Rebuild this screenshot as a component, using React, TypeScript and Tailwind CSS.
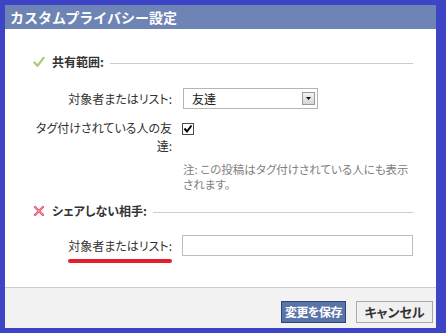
import React from 'react';

const jp = "font-['Noto_Sans_CJK_JP','Noto_Sans',sans-serif] [font-feature-settings:'palt']";

function CheckIcon() {
  return (
    <svg width="13" height="12" viewBox="0 0 13 12">
      <path d="M1.5 6.5 L5 10 L11.5 1.5" fill="none" stroke="#8cc152" strokeWidth="2.2" strokeLinecap="round" strokeLinejoin="round" />
      <path d="M1.5 6.5 L5 10 L11.5 1.5" fill="none" stroke="#c8e6a0" strokeWidth="0.8" strokeLinecap="round" strokeLinejoin="round" />
    </svg>
  );
}

function CrossIcon() {
  return (
    <svg width="12" height="12" viewBox="0 0 12 12">
      <path d="M2 2 L10 10 M10 2 L2 10" fill="none" stroke="#e0566a" strokeWidth="2.4" strokeLinecap="round" />
      <path d="M2 2 L10 10 M10 2 L2 10" fill="none" stroke="#f3a3ae" strokeWidth="0.7" strokeLinecap="round" />
    </svg>
  );
}

function SectionHeader({ icon, title }: { icon: React.ReactNode; title: string }) {
  return (
    <div className="flex items-center h-[16px]">
      <div className="w-[12px] flex justify-center">{icon}</div>
      <span className="ml-[7px] text-[12px] font-bold text-[#333] whitespace-nowrap">{title}</span>
      <div className="flex-1 ml-[6px] h-px bg-[#cccccc] mt-[2px]" />
    </div>
  );
}

export default function App() {
  return (
    <div className={`w-[446px] h-[333px] bg-[#3d45c6] pt-[5px] pl-[5px] pr-[10px] pb-[5px] ${jp}`}>
      <div className="flex flex-col h-full bg-white">
        {/* Title */}
        <div className="h-[24px] bg-[#6d84b4] text-white font-bold text-[14px] pl-[5px] flex items-center [font-feature-settings:normal]">
          カスタムプライバシー設定
        </div>

        {/* Body */}
        <div className="flex-1 pl-[28px] pr-[23px] pt-[25px]">
          <SectionHeader icon={<CheckIcon />} title="共有範囲:" />

          <div className="flex items-center mt-[18px]">
            <div className="w-[139px] text-right text-[12px] text-[#333] whitespace-nowrap">対象者またはリスト:</div>
            <div className="ml-[11px] w-[135px] h-[21px] border border-[#b5b5b5] flex items-center justify-between pl-[8px] pr-[2px]">
              <span className="text-[12px] text-[#222]">友達</span>
              <div className="w-[13px] h-[13px] border border-[#9a9a9a] bg-gradient-to-b from-[#f4f4f4] to-[#d6d6d6] flex items-center justify-center">
                <svg width="5" height="3" viewBox="0 0 5 3"><path d="M0 0 H5 L2.5 3 Z" fill="#111" /></svg>
              </div>
            </div>
          </div>

          <div className="flex items-start mt-[10px]">
            <div className="w-[139px] text-right text-[12px] leading-[18px] text-[#333] whitespace-nowrap">
              タグ付けされている人の友<br />達:
            </div>
            <div className="ml-[10px] mt-[4px]">
              <svg width="12" height="12" viewBox="0 0 12 12">
                <rect x="0.5" y="0.5" width="11" height="11" fill="#fff" stroke="#4a4a4a" />
                <path d="M2.5 5.5 L5 8.5 L9.5 2.5" fill="none" stroke="#000" strokeWidth="2" />
              </svg>
            </div>
          </div>

          <div className="ml-[150px] mt-[7px] text-[11.5px] leading-[15px] text-[#808080] whitespace-nowrap">
            注: この投稿はタグ付けされている人にも表示<br />されます。
          </div>

          <div className="mt-[11px]">
            <SectionHeader icon={<CrossIcon />} title="シェアしない相手:" />
          </div>

          <div className="flex items-center mt-[16px]">
            <div className="w-[139px] text-right text-[12px] text-[#333] whitespace-nowrap">対象者またはリスト:</div>
            <div className="ml-[10px] flex-1 h-[21px] border border-[#bdbdbd]" />
          </div>
          <div className="w-[139px] flex justify-end mt-[3px]">
            <div className="w-[104px] h-[4px] rounded-full bg-[#e41e2b]" />
          </div>
        </div>

        {/* Footer */}
        <div className="h-[41px] border-t border-[#cccccc] bg-[#f2f2f2] flex justify-end items-start pt-[13px] pr-[3px] gap-[10px]">
          <button className="w-[65px] h-[22px] bg-[#5b74a8] border border-[#29447e] text-white font-bold text-[12px] tracking-[-0.5px] whitespace-nowrap flex items-center justify-center">
            変更を保存
          </button>
          <button className="w-[77px] h-[22px] bg-[#f0f0f0] border border-[#a8a8a8] text-[#333] font-bold text-[13px] whitespace-nowrap flex items-center justify-center">
            キャンセル
          </button>
        </div>
      </div>
    </div>
  );
}
